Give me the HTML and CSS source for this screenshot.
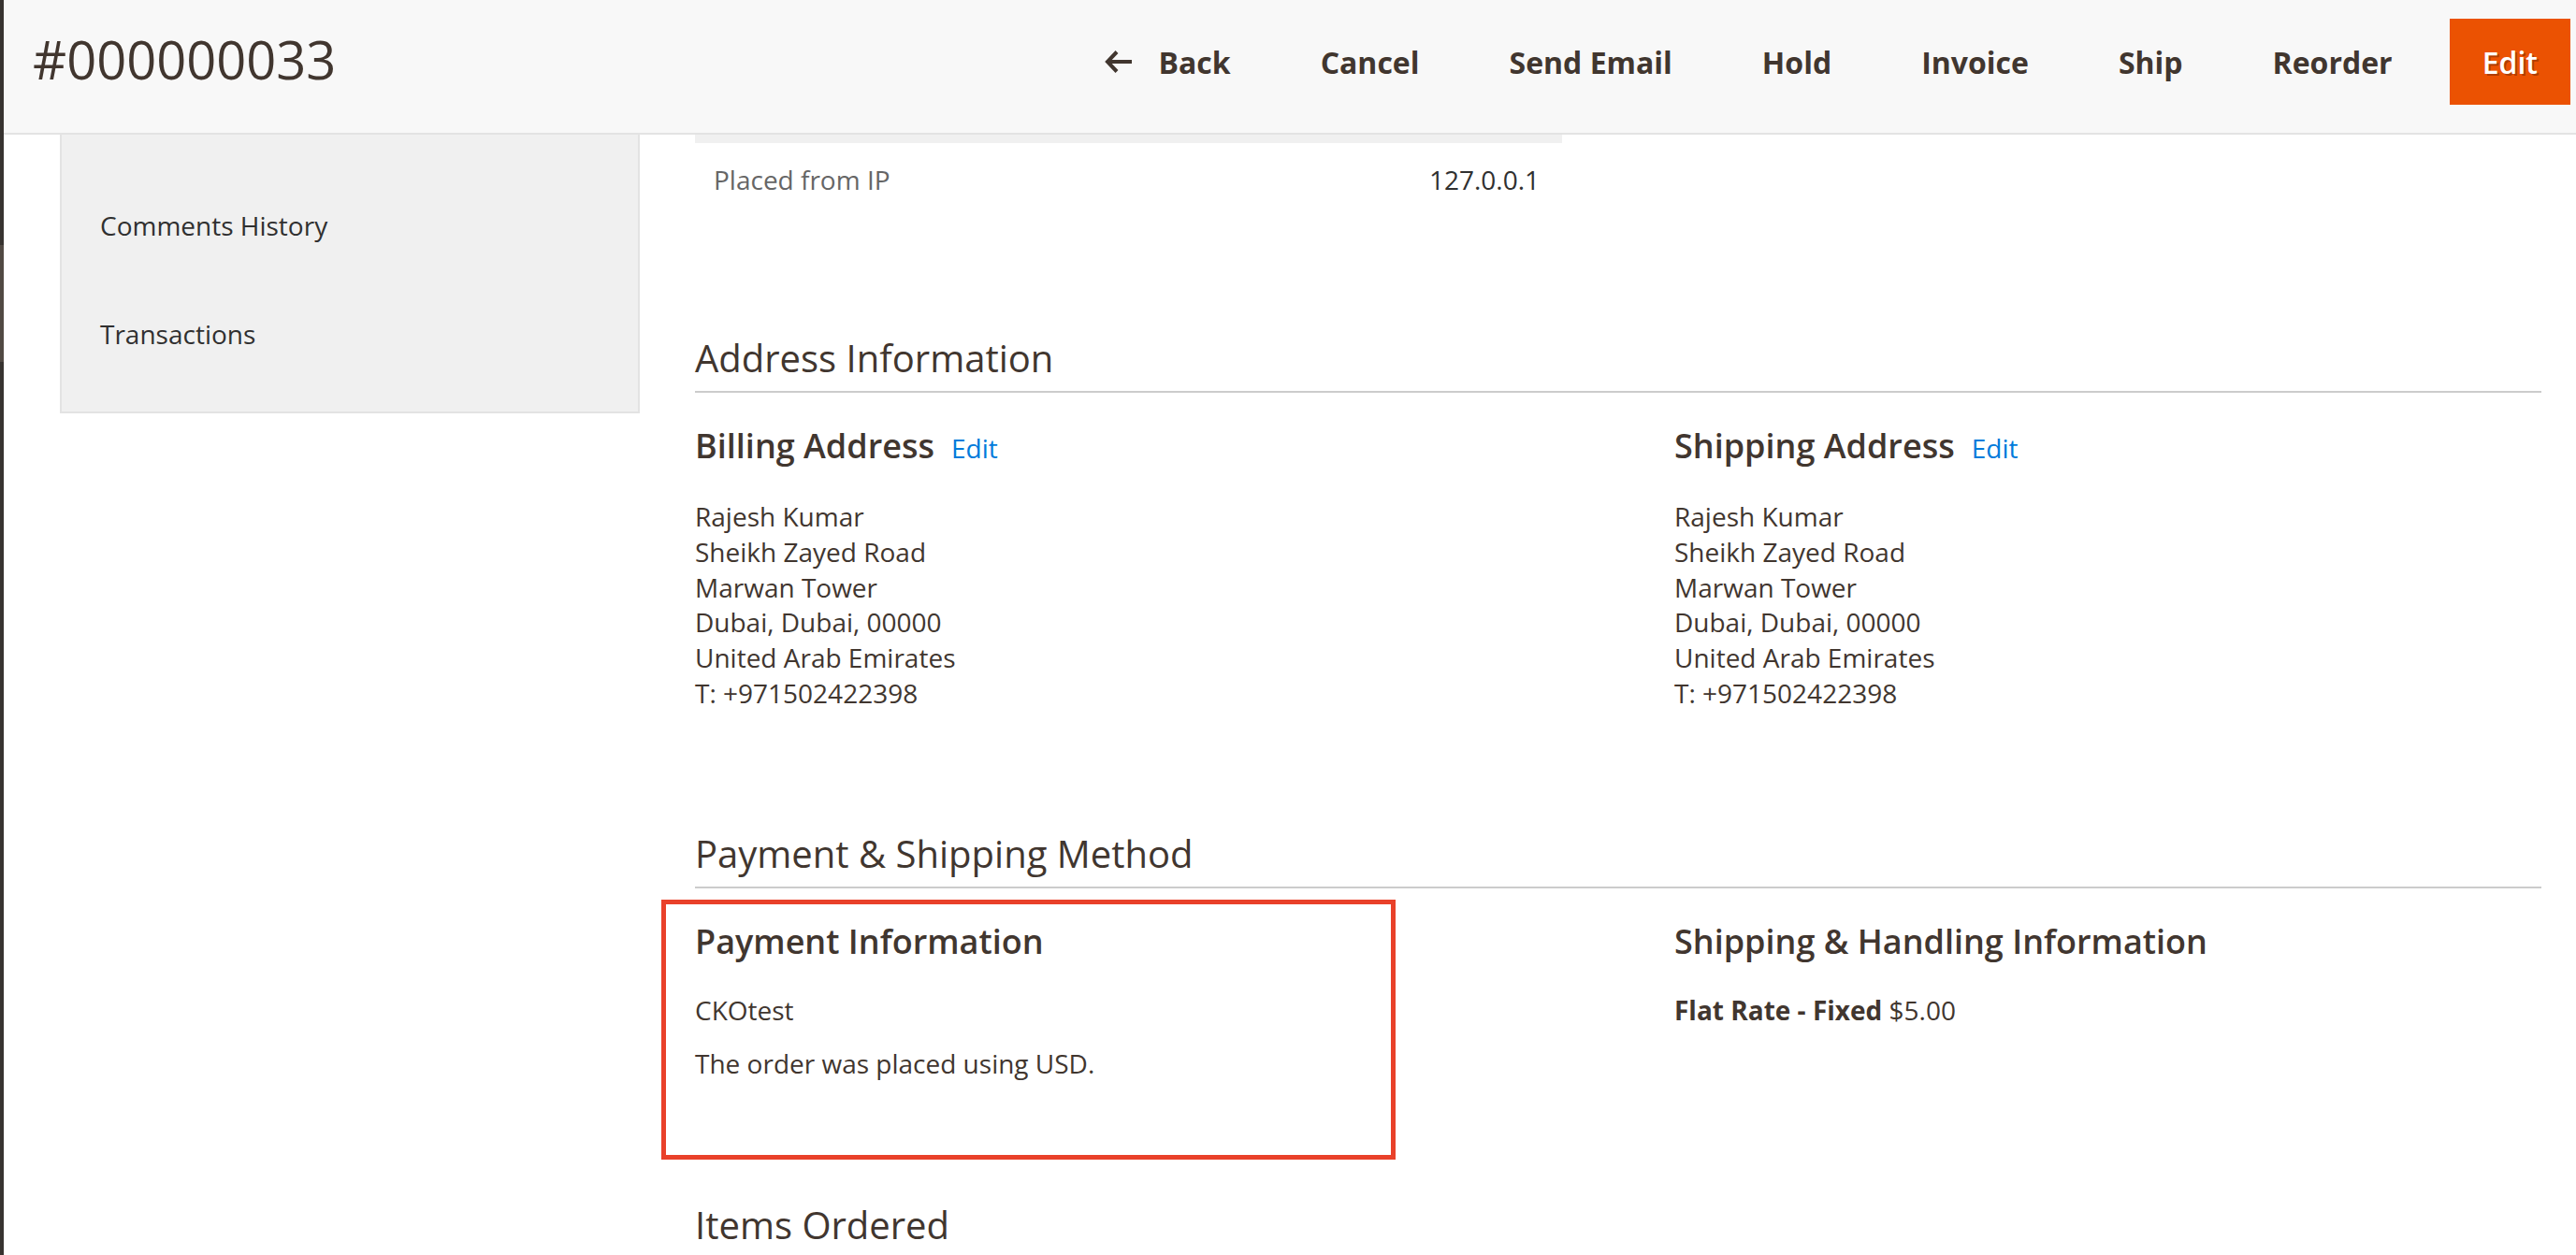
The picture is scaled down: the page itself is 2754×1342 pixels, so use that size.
FILE: index.html
```html
<!DOCTYPE html>
<html lang="en">
<head>
<meta charset="utf-8">
<title>#000000033 / Orders</title>
<link rel="stylesheet" href="styles.css">
</head>
<body>
<div class="app">
  <div class="edge">
    <span class="edge-dark edge-top"></span>
    <span class="edge-mid"></span>
    <span class="edge-dark edge-bottom"></span>
  </div>
  <div class="page">
    <header class="page-header">
      <h1 class="page-title">#000000033</h1>
      <div class="page-actions">
        <button class="btn btn-back" type="button">
          <svg class="back-icon" width="30" height="26" viewBox="0 0 30 26" aria-hidden="true">
            <path d="M3 13 H29 M13 2.5 L3 13 L13 23.5" fill="none" stroke="#41362f" stroke-width="4" stroke-linecap="butt" stroke-linejoin="miter"/>
          </svg>
          Back
        </button>
        <button class="btn" type="button">Cancel</button>
        <button class="btn" type="button">Send Email</button>
        <button class="btn" type="button">Hold</button>
        <button class="btn" type="button">Invoice</button>
        <button class="btn" type="button">Ship</button>
        <button class="btn" type="button">Reorder</button>
        <button class="btn btn-primary" type="button">Edit</button>
      </div>
    </header>

    <div class="content">
      <aside class="tabs">
        <div class="tab-item">Comments History</div>
        <div class="tab-item">Transactions</div>
      </aside>

      <main class="main">
        <div class="info-table">
          <div class="info-row-alt"></div>
          <div class="info-row">
            <span class="info-label">Placed from IP</span>
            <span class="info-value">127.0.0.1</span>
          </div>
        </div>

        <section class="section">
          <h2 class="section-title">Address Information</h2>
          <div class="section-cols">
            <div class="col">
              <h3 class="col-title">Billing Address<a class="edit-link" href="#">Edit</a></h3>
              <address class="address">
                Rajesh Kumar<br>
                Sheikh Zayed Road<br>
                Marwan Tower<br>
                Dubai, Dubai, 00000<br>
                United Arab Emirates<br>
                T: +971502422398
              </address>
            </div>
            <div class="col">
              <h3 class="col-title">Shipping Address<a class="edit-link" href="#">Edit</a></h3>
              <address class="address">
                Rajesh Kumar<br>
                Sheikh Zayed Road<br>
                Marwan Tower<br>
                Dubai, Dubai, 00000<br>
                United Arab Emirates<br>
                T: +971502422398
              </address>
            </div>
          </div>
        </section>

        <section class="section">
          <h2 class="section-title">Payment &amp; Shipping Method</h2>
          <div class="section-cols">
            <div class="col col-payment">
              <h3 class="col-title">Payment Information</h3>
              <p class="col-text">CKOtest</p>
              <p class="col-text col-text-next">The order was placed using USD.</p>
              <div class="highlight-box"></div>
            </div>
            <div class="col">
              <h3 class="col-title">Shipping &amp; Handling Information</h3>
              <p class="col-text"><strong>Flat Rate - Fixed</strong> $5.00</p>
            </div>
          </div>
        </section>

        <section class="section">
          <h2 class="section-title">Items Ordered</h2>
        </section>
      </main>
    </div>
  </div>
</div>
</body>
</html>
```

FILE: styles.css
```css
* {
  box-sizing: border-box;
}

html,
body {
  margin: 0;
  padding: 0;
  background: #ffffff;
  height: 100%;
  overflow: hidden;
}

body {
  font-family: "Open Sans", "Liberation Sans", Arial, sans-serif;
  font-size: 28px;
  color: #303030;
}

.app {
  display: flex;
  min-height: 100vh;
}

/* left strip of admin menu */
.edge {
  width: 4px;
  flex: 0 0 4px;
  display: flex;
  flex-direction: column;
}

.edge-dark {
  background: #373330;
}

.edge-top {
  height: 262px;
}

.edge-mid {
  height: 125px;
  background: #514943;
}

.edge-bottom {
  flex: 1;
}

.page {
  flex: 1;
  min-width: 0;
}

/* header */
.page-header {
  height: 144px;
  background: #f8f8f8;
  border-bottom: 2px solid #e3e3e3;
  display: flex;
  align-items: flex-start;
  justify-content: space-between;
  padding: 20px 6px 0 31px;
}

.page-title {
  margin: 5px 0 0;
  font-size: 56px;
  line-height: 76px;
  font-weight: 400;
  color: #41362f;
}

.page-actions {
  display: flex;
  align-items: center;
  gap: 26px;
}

.btn {
  height: 92px;
  display: flex;
  align-items: center;
  padding: 0 35px;
  border: 0;
  background: transparent;
  font-family: "Open Sans", "Liberation Sans", Arial, sans-serif;
  font-size: 32px;
  font-weight: 700;
  color: #41362f;
  cursor: pointer;
}

.back-icon {
  margin-right: 28px;
  flex: 0 0 auto;
}

.btn-primary {
  background: #eb5202;
  color: #ffffff;
  font-weight: 600;
  text-shadow: 2px 2px 0 rgba(0, 0, 0, 0.25);
}

/* content */
.content {
  display: flex;
  align-items: flex-start;
  padding-left: 60px;
}

.tabs {
  width: 620px;
  flex: 0 0 620px;
  background: #f0f0f0;
  border: 2px solid #e3e3e3;
  border-top: 0;
  padding: 39px 0 25px;
}

.tab-item {
  height: 116px;
  display: flex;
  align-items: center;
  padding-left: 41px;
  font-size: 28px;
  line-height: 38px;
  color: #303030;
}

.main {
  width: 1974px;
  margin-left: 59px;
}

.info-table {
  width: 927px;
}

.info-row-alt {
  height: 9px;
  background: #f0f0f0;
}

.info-row {
  display: flex;
  justify-content: space-between;
  padding: 20px 24px 20px 20px;
  line-height: 38px;
}

.info-label {
  color: #666666;
}

.info-value {
  color: #303030;
}

.section-title {
  margin: 128px 0 0;
  font-size: 40px;
  line-height: 48px;
  font-weight: 400;
  color: #41362f;
  padding-bottom: 11px;
  border-bottom: 2px solid #cccccc;
}

.section-cols {
  display: grid;
  grid-template-columns: 927px 927px;
  justify-content: space-between;
  margin-top: 35px;
}

.col {
  position: relative;
}

.col-title {
  margin: 0;
  font-size: 36px;
  line-height: 44px;
  font-weight: 600;
  color: #41362f;
}

.edit-link {
  margin-left: 18px;
  font-size: 28px;
  font-weight: 400;
  color: #007bdb;
  text-decoration: none;
}

.address {
  margin-top: 33px;
  font-style: normal;
  line-height: 37.8px;
  color: #41362f;
}

.col-text {
  margin: 33px 0 0;
  line-height: 37.8px;
  color: #41362f;
}

.col-text-next {
  margin-top: 19px;
}

.col-text strong {
  font-weight: 700;
}

.highlight-box {
  position: absolute;
  left: -36px;
  top: -23px;
  width: 785px;
  height: 278px;
  border: 5px solid #e9412a;
  pointer-events: none;
}

.section:last-child .section-title {
  margin-top: 130px;
}
```
